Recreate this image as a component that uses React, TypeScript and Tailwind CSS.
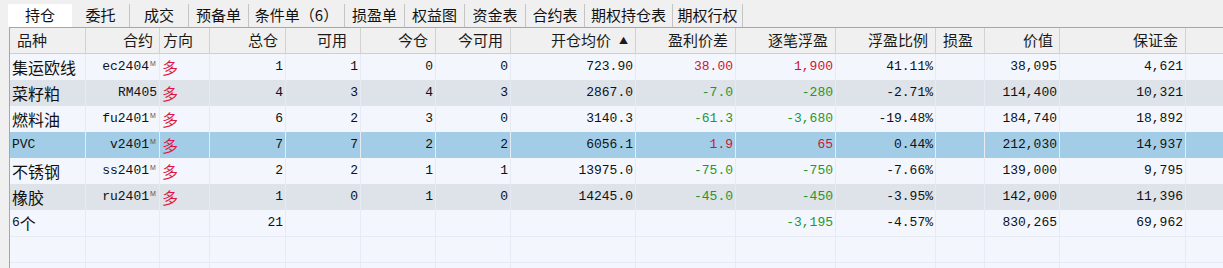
import React from "react";

type Col = { w: number; align: "left" | "right"; head: string; hpad: string; dpad: string };

const cols: Col[] = [
  { w: 76, align: "left", head: "品种", hpad: "pl-[7px]", dpad: "pl-[2px]" },
  { w: 74, align: "right", head: "合约", hpad: "pr-[6px]", dpad: "pr-[2px]" },
  { w: 50, align: "left", head: "方向", hpad: "pl-[3px]", dpad: "pl-[2px]" },
  { w: 76, align: "right", head: "总仓", hpad: "pr-[7px]", dpad: "pr-[2px]" },
  { w: 75, align: "right", head: "可用", hpad: "pr-[13px]", dpad: "pr-[2px]" },
  { w: 75, align: "right", head: "今仓", hpad: "pr-[7px]", dpad: "pr-[2px]" },
  { w: 75, align: "right", head: "今可用", hpad: "pr-[7px]", dpad: "pr-[2px]" },
  { w: 125, align: "right", head: "开仓均价", hpad: "pr-[7px]", dpad: "pr-[2px]" },
  { w: 100, align: "right", head: "盈利价差", hpad: "pr-[7px]", dpad: "pr-[2px]" },
  { w: 100, align: "right", head: "逐笔浮盈", hpad: "pr-[7px]", dpad: "pr-[2px]" },
  { w: 100, align: "right", head: "浮盈比例", hpad: "pr-[7px]", dpad: "pr-[2px]" },
  { w: 49, align: "left", head: "损盈", hpad: "pl-[7px]", dpad: "pl-[2px]" },
  { w: 75, align: "right", head: "价值", hpad: "pr-[6px]", dpad: "pr-[2px]" },
  { w: 126, align: "right", head: "保证金", hpad: "pr-[7px]", dpad: "pr-[2px]" },
];

type Row = {
  name: string;
  code: string;
  m: boolean;
  dir: string;
  vals: string[];
  diff: string;
  pnl: string;
  color: "r" | "g" | "";
  ratio: string;
  value: string;
  margin: string;
  bg: "l" | "g" | "s";
};

const rows: Row[] = [
  { name: "集运欧线", code: "ec2404", m: true, dir: "多", vals: ["1", "1", "0", "0", "723.90"], diff: "38.00", pnl: "1,900", color: "r", ratio: "41.11%", value: "38,095", margin: "4,621", bg: "l" },
  { name: "菜籽粕", code: "RM405", m: false, dir: "多", vals: ["4", "3", "4", "3", "2867.0"], diff: "-7.0", pnl: "-280", color: "g", ratio: "-2.71%", value: "114,400", margin: "10,321", bg: "g" },
  { name: "燃料油", code: "fu2401", m: true, dir: "多", vals: ["6", "2", "3", "0", "3140.3"], diff: "-61.3", pnl: "-3,680", color: "g", ratio: "-19.48%", value: "184,740", margin: "18,892", bg: "l" },
  { name: "PVC", code: "v2401", m: true, dir: "多", vals: ["7", "7", "2", "2", "6056.1"], diff: "1.9", pnl: "65", color: "r", ratio: "0.44%", value: "212,030", margin: "14,937", bg: "s" },
  { name: "不锈钢", code: "ss2401", m: true, dir: "多", vals: ["2", "2", "1", "1", "13975.0"], diff: "-75.0", pnl: "-750", color: "g", ratio: "-7.66%", value: "139,000", margin: "9,795", bg: "l" },
  { name: "橡胶", code: "ru2401", m: true, dir: "多", vals: ["1", "0", "1", "0", "14245.0"], diff: "-45.0", pnl: "-450", color: "g", ratio: "-3.95%", value: "142,000", margin: "11,396", bg: "g" },
];

const tabs: { t: string; w: number }[] = [
  { t: "持仓", w: 64 },
  { t: "委托", w: 58 },
  { t: "成交", w: 59 },
  { t: "预备单", w: 60 },
  { t: "条件单（6）", w: 96 },
  { t: "损盈单", w: 60 },
  { t: "权益图", w: 60 },
  { t: "资金表", w: 61 },
  { t: "合约表", w: 59 },
  { t: "期权持仓表", w: 88 },
  { t: "期权行权", w: 70 },
];

const CJK = "font-['Noto_Sans_CJK_SC',sans-serif] text-[16px]";
const MONO = "font-['Liberation_Mono','Noto_Sans_CJK_SC',monospace] text-[13px]";

function Mixed({ text }: { text: string }) {
  const parts = text.match(/[\u0000-\u007f]+|[^\u0000-\u007f]+/g) || [];
  return (
    <>
      {parts.map((p, i) =>
        /^[\u0000-\u007f]+$/.test(p) ? (
          <span key={i} className={MONO}>{p}</span>
        ) : (
          <span key={i} className={CJK}>{p}</span>
        )
      )}
    </>
  );
}

const bgCls = { l: "bg-[#f3f7fd]", g: "bg-[#dee2e9]", s: "bg-[#a3cde6]" };
const colCls = { r: "text-[#cf1239]", g: "text-[#23962f]", "": "text-[#111]" };

function Cell({ i, children }: { i: number; children?: React.ReactNode }) {
  const c = cols[i];
  return (
    <div
      className={`shrink-0 h-full flex items-center border-r border-[#e6ebf3] ${c.align === "right" ? "justify-end" : "justify-start"} ${c.dpad} whitespace-nowrap overflow-hidden`}
      style={{ width: c.w }}
    >
      {children}
    </div>
  );
}

function DataRow({ r }: { r: Row }) {
  const num = (s: string, color = "text-[#111]") => <span className={`${MONO} ${color}`}>{s}</span>;
  return (
    <div className={`flex h-[26px] ${bgCls[r.bg]} text-[#111]`}>
      <Cell i={0}><Mixed text={r.name} /></Cell>
      <Cell i={1}>
        <span className={MONO}>{r.code}</span>
        {r.m ? (
          <span className="font-['Liberation_Sans',sans-serif] text-[7px] leading-[7px] text-[#555] self-start mt-[6px] ml-[1px] w-[7px]">M</span>
        ) : null}
      </Cell>
      <Cell i={2}><span className={`${CJK} text-[#e0173d]`}>{r.dir}</span></Cell>
      <Cell i={3}>{num(r.vals[0])}</Cell>
      <Cell i={4}>{num(r.vals[1])}</Cell>
      <Cell i={5}>{num(r.vals[2])}</Cell>
      <Cell i={6}>{num(r.vals[3])}</Cell>
      <Cell i={7}>{num(r.vals[4])}</Cell>
      <Cell i={8}>{num(r.diff, colCls[r.color])}</Cell>
      <Cell i={9}>{num(r.pnl, colCls[r.color])}</Cell>
      <Cell i={10}>{num(r.ratio)}</Cell>
      <Cell i={11} />
      <Cell i={12}>{num(r.value)}</Cell>
      <Cell i={13}>{num(r.margin)}</Cell>
      <div className="flex-1 h-full" />
    </div>
  );
}

function EmptyRow() {
  return (
    <div className="flex h-[26px] bg-[#f3f7fd] border-t border-[#e6ebf3] box-border">
      {cols.map((_, i) => (
        <Cell key={i} i={i} />
      ))}
      <div className="flex-1 h-full" />
    </div>
  );
}

export default function App() {
  return (
    <div className="w-[1223px] h-[268px] overflow-hidden bg-[#f0f0f0] text-[#111]">
      <div className="flex items-end h-[27px] pl-[8px]">
        {tabs.map((t, i) => (
          <div
            key={t.t}
            className={`h-[23px] flex items-center justify-center font-['Noto_Sans_CJK_SC',sans-serif] text-[15px] text-[#111] ${
              i === 0 ? "bg-white" : "border-r border-[#c4c4c4]"
            }`}
            style={{ width: t.w }}
          >
            {t.t}
          </div>
        ))}
      </div>
      <div className="ml-[9px] border-l border-t border-[#a6a6a6] h-[241px] bg-[#f3f7fd]">
        <div className="flex h-[26px] bg-[#f0f0f0] border-b border-[#cfcfcf] box-border">
          {cols.map((c, i) => (
            <div
              key={i}
              className={`shrink-0 h-full flex items-center border-r border-[#d2d2d2] ${c.align === "right" ? "justify-end" : "justify-start"} ${c.hpad} font-['Noto_Sans_CJK_SC',sans-serif] text-[15px] text-[#1a1a1a] whitespace-nowrap`}
              style={{ width: c.w }}
            >
              {c.head}
              {i === 7 ? <span className="ml-[8px] text-[9px] leading-none">▲</span> : null}
            </div>
          ))}
          <div className="flex-1" />
        </div>
        {rows.map((r, i) => (
          <DataRow key={i} r={r} />
        ))}
        <div className="flex h-[26px] bg-[#f3f7fd]">
          <Cell i={0}><Mixed text="6个" /></Cell>
          <Cell i={1} />
          <Cell i={2} />
          <Cell i={3}><span className={MONO}>21</span></Cell>
          <Cell i={4} />
          <Cell i={5} />
          <Cell i={6} />
          <Cell i={7} />
          <Cell i={8} />
          <Cell i={9}><span className={`${MONO} text-[#23962f]`}>-3,195</span></Cell>
          <Cell i={10}><span className={MONO}>-4.57%</span></Cell>
          <Cell i={11} />
          <Cell i={12}><span className={MONO}>830,265</span></Cell>
          <Cell i={13}><span className={MONO}>69,962</span></Cell>
          <div className="flex-1 h-full" />
        </div>
        <EmptyRow />
        <EmptyRow />
      </div>
    </div>
  );
}
